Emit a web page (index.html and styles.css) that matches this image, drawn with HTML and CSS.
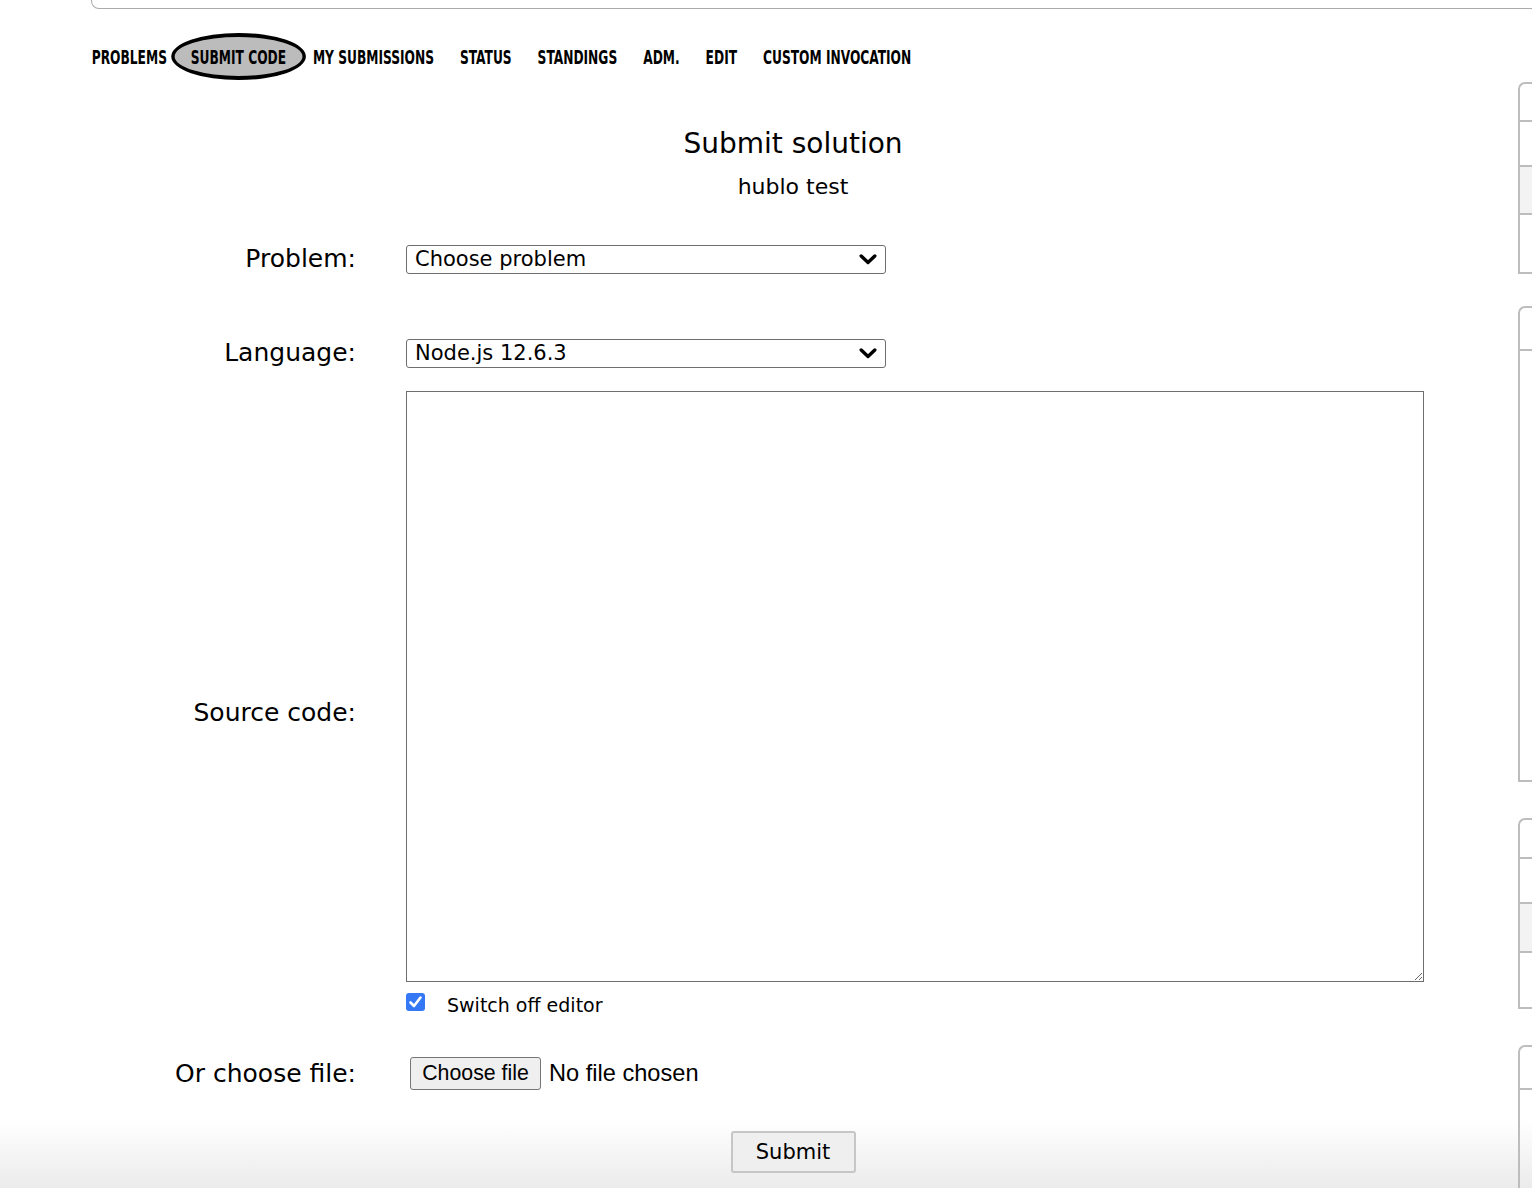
FILE: index.html
```html
<!DOCTYPE html>
<html lang="en">
<head>
<meta charset="utf-8">
<title>Submit solution</title>
<link rel="stylesheet" href="styles.css">
</head>
<body>
<div class="topbar"></div>
<div class="page">
  <main class="main">
    <nav class="nav">
      <a class="nav-item nav-first" href="#">PROBLEMS</a>
      <a class="nav-item nav-active" href="#">SUBMIT CODE</a>
      <a class="nav-item" href="#">MY SUBMISSIONS</a>
      <a class="nav-item" href="#">STATUS</a>
      <a class="nav-item" href="#">STANDINGS</a>
      <a class="nav-item" href="#">ADM.</a>
      <a class="nav-item" href="#">EDIT</a>
      <a class="nav-item" href="#">CUSTOM INVOCATION</a>
    </nav>

    <h1 class="title">Submit solution</h1>
    <div class="contest">hublo test</div>

    <form class="form">
      <div class="row">
        <label class="label" for="problem">Problem:</label>
        <div class="field">
          <select id="problem" class="select"><option>Choose problem</option></select>
        </div>
      </div>

      <div class="row row-language">
        <label class="label" for="lang">Language:</label>
        <div class="field">
          <select id="lang" class="select"><option>Node.js 12.6.3</option></select>
        </div>
      </div>

      <div class="row row-source">
        <label class="label" for="source">Source code:</label>
        <div class="field field-source">
          <textarea id="source" class="code"></textarea>
          <label class="check-line">
            <input type="checkbox" class="check" checked>
            <span>Switch off editor</span>
          </label>
        </div>
      </div>

      <div class="row row-file">
        <span class="label">Or choose file:</span>
        <div class="field field-file">
          <button type="button" class="file-btn">Choose file</button>
          <span class="file-name">No file chosen</span>
        </div>
      </div>

      <div class="submit-row">
        <button type="button" class="submit-btn">Submit</button>
      </div>
    </form>
  </main>

  <aside class="sidebar">
    <div class="panel panel-1">
      <div class="prow h36"></div>
      <div class="prow h43"></div>
      <div class="prow h46 gray"></div>
      <div class="prow h57 last"></div>
    </div>
    <div class="panel panel-2">
      <div class="prow h41"></div>
      <div class="prow h429 last"></div>
    </div>
    <div class="panel panel-3">
      <div class="prow h37"></div>
      <div class="prow h43"></div>
      <div class="prow h47 gray"></div>
      <div class="prow h54 last"></div>
    </div>
    <div class="panel panel-4">
      <div class="prow h41"></div>
      <div class="prow h200 last"></div>
    </div>
  </aside>
</div>
</body>
</html>
```

FILE: styles.css
```css
html {
  min-height: 1188px;
  background: linear-gradient(to bottom, #ffffff 0, #ffffff 1120px, #ebebeb 1188px) no-repeat;
}

body {
  margin: 0;
  font-family: "DejaVu Sans", Verdana, sans-serif;
  color: #000;
  overflow: hidden;
}

.topbar {
  margin-left: 91px;
  height: 8px;
  border-left: 1px solid #ababab;
  border-bottom: 1px solid #ababab;
  border-bottom-left-radius: 8px;
}

.page {
  display: flex;
  align-items: flex-start;
}

.main {
  flex: 0 0 1404px;
  padding-left: 91px;
  display: flex;
  flex-direction: column;
}

/* ---------- navigation (narrow bold face, condensed horizontally) ---------- */
.nav {
  display: flex;
  align-items: center;
  height: 47px;
  margin-top: 24px;
  padding-left: 1px;
  font-family: "DejaVu Sans Condensed", "DejaVu Sans", sans-serif;
  font-weight: bold;
  font-size: 20px;
  transform: scaleX(0.68);
  transform-origin: 0 50%;
}

.nav-item {
  color: #000;
  text-decoration: none;
  margin-right: 38.2px;
  white-space: nowrap;
}

.nav-first {
  margin-right: 5.9px;
}

.nav-active {
  box-sizing: border-box;
  width: 198.5px;
  height: 47px;
  display: flex;
  align-items: center;
  justify-content: center;
  margin-right: 10.3px;
  background: #bcbcbc;
  border-style: solid;
  border-color: #000;
  border-width: 4px 5.9px;
  border-radius: 50%;
}

/* ---------- heading ---------- */
.title {
  margin: 47px 0 0;
  font-size: 28px;
  font-weight: normal;
  line-height: 34px;
  text-align: center;
}

.contest {
  margin-top: 12px;
  font-size: 22px;
  line-height: 28px;
  text-align: center;
}

/* ---------- form ---------- */
.form {
  margin-top: 43px;
}

.row {
  display: flex;
  align-items: center;
}

.label {
  flex: 0 0 265px;
  margin-right: 50px;
  text-align: right;
  font-size: 25px;
  line-height: 30px;
}

.field {
  display: flex;
  align-items: center;
}

.select {
  box-sizing: border-box;
  width: 480px;
  height: 29px;
  margin: 0;
  padding: 0 30px 0 8px;
  border: 1px solid #6e6e6e;
  border-radius: 3px;
  background: #fff url("data:image/svg+xml;utf8,<svg xmlns='http://www.w3.org/2000/svg' width='18' height='11' viewBox='0 0 18 11'><path d='M2.2 2 L9 8.4 L15.8 2' fill='none' stroke='black' stroke-width='3.4' stroke-linecap='round' stroke-linejoin='round'/></svg>") no-repeat right 8px center;
  appearance: none;
  -webkit-appearance: none;
  font-family: "DejaVu Sans", Verdana, sans-serif;
  font-size: 21px;
  color: #000;
}

.row-language {
  margin-top: 64px;
}

.row-source {
  margin-top: 23px;
}

.field-source {
  flex-direction: column;
  align-items: flex-start;
  padding-bottom: 18px;
}

.code {
  box-sizing: border-box;
  width: 1018px;
  height: 591px;
  margin: 0;
  border: 1px solid #6e6e6e;
  background: #fff;
  resize: both;
}

.check-line {
  display: flex;
  align-items: flex-start;
  height: 24px;
  margin-top: 11px;
  font-size: 19px;
  line-height: 24px;
}

.check {
  appearance: none;
  -webkit-appearance: none;
  width: 19px;
  height: 18px;
  margin: 0 22px 0 0;
  border-radius: 3px;
  background: #3478f6 url("data:image/svg+xml;utf8,<svg xmlns='http://www.w3.org/2000/svg' width='19' height='18' viewBox='0 0 19 18'><path d='M4.5 9.5 L8 13 L14.5 4.5' fill='none' stroke='white' stroke-width='2.6' stroke-linecap='round' stroke-linejoin='round'/></svg>") no-repeat center;
}

.row-file {
  margin-top: 22px;
}

.file-btn {
  box-sizing: border-box;
  width: 131px;
  height: 33px;
  margin: 0 8px 0 4px;
  padding: 0;
  border: 1px solid #767676;
  border-radius: 3px;
  background: #efefef;
  font-family: "Liberation Sans", Arial, sans-serif;
  font-size: 21.3px;
  color: #000;
}

.file-name {
  font-family: "Liberation Sans", Arial, sans-serif;
  font-size: 23.6px;
}

.submit-row {
  margin-top: 41px;
  display: flex;
  justify-content: center;
}

.submit-btn {
  box-sizing: border-box;
  width: 125px;
  height: 42px;
  padding: 0;
  border: 2px solid #c6c6c6;
  border-radius: 3px;
  background: #efefef;
  font-family: "DejaVu Sans", Verdana, sans-serif;
  font-size: 21px;
  color: #000;
}

/* ---------- sidebar ---------- */
.sidebar {
  flex: 0 0 320px;
  margin-left: 23px;
}

.panel {
  border: 2px solid #bdbdbd;
  border-right: none;
  border-top-left-radius: 7px;
}

.panel-1 { margin-top: 73px; }
.panel-2 { margin-top: 32px; }
.panel-3 { margin-top: 36px; }
.panel-4 { margin-top: 36px; }

.prow {
  border-bottom: 2px solid #bdbdbd;
}

.prow.last {
  border-bottom: none;
}

.gray { background: #f3f3f3; }

.h36 { height: 36px; }
.h37 { height: 37px; }
.h41 { height: 41px; }
.h43 { height: 43px; }
.h46 { height: 46px; }
.h47 { height: 47px; }
.h54 { height: 54px; }
.h57 { height: 57px; }
.h200 { height: 200px; }
.h429 { height: 429px; }
```
